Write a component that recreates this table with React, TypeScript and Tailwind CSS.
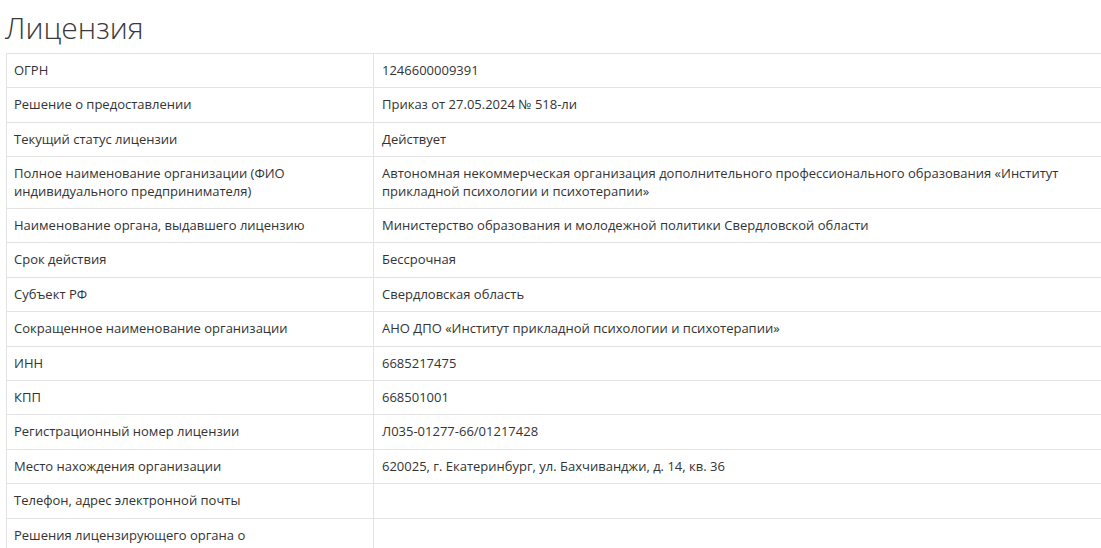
const rows: [string, string][] = [
  ['ОГРН', '1246600009391'],
  ['Решение о предоставлении', 'Приказ от 27.05.2024 № 518-ли'],
  ['Текущий статус лицензии', 'Действует'],
  [
    'Полное наименование организации (ФИО индивидуального предпринимателя)',
    'Автономная некоммерческая организация дополнительного профессионального образования «Институт прикладной психологии и психотерапии»',
  ],
  ['Наименование органа, выдавшего лицензию', 'Министерство образования и молодежной политики Свердловской области'],
  ['Срок действия', 'Бессрочная'],
  ['Субъект РФ', 'Свердловская область'],
  ['Сокращенное наименование организации', 'АНО ДПО «Институт прикладной психологии и психотерапии»'],
  ['ИНН', '6685217475'],
  ['КПП', '668501001'],
  ['Регистрационный номер лицензии', 'Л035-01277-66/01217428'],
  ['Место нахождения организации', '620025, г. Екатеринбург, ул. Бахчиванджи, д. 14, кв. 36'],
  ['Телефон, адрес электронной почты', ''],
  ['Решения лицензирующего органа о', ''],
]

export default function App() {
  return (
    <div className="h-[548px] w-[1101px] overflow-hidden bg-white font-['Open_Sans',sans-serif] text-[#333]">
      <h1 className="pl-[5px] pt-[8px] text-[30px] font-light leading-[40px] text-[#3a3a3a]">Лицензия</h1>
      <table className="ml-[6px] mt-[5px] w-[1100px] border-collapse text-[13px] leading-[17.4px]">
        <tbody>
          {rows.map(([label, value]) => (
            <tr key={label}>
              <td className="w-[367px] border border-[#e3e3e3] py-[8px] pl-[7px] pr-[8px] align-top">{label}</td>
              <td className="border border-[#e3e3e3] py-[8px] pl-[8px] pr-[8px] align-top">{value}</td>
            </tr>
          ))}
        </tbody>
      </table>
    </div>
  )
}
